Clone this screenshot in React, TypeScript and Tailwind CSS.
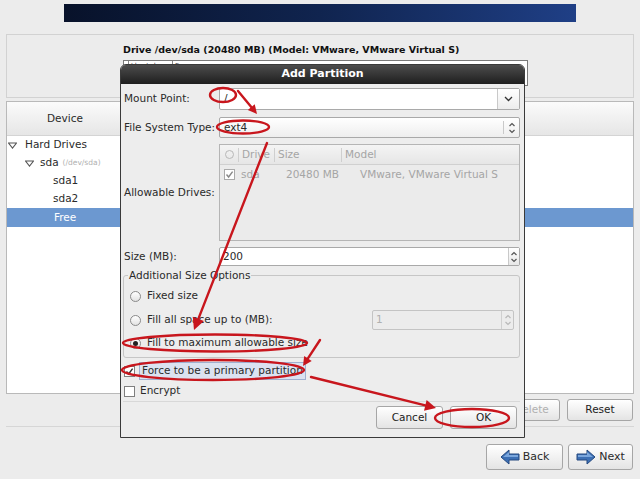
import React from "react";

const RED = "#c8161d";

type Pt = [number, number];

function Arrow({ from, to, head = 9 }: { from: Pt; to: Pt; head?: number }) {
  const dx = to[0] - from[0];
  const dy = to[1] - from[1];
  const len = Math.hypot(dx, dy);
  const ux = dx / len;
  const uy = dy / len;
  const bx = to[0] - ux * head;
  const by = to[1] - uy * head;
  const w = head * 0.5;
  const pts = `${to[0]},${to[1]} ${bx - uy * w},${by + ux * w} ${bx + uy * w},${by - ux * w}`;
  return (
    <g>
      <line x1={from[0]} y1={from[1]} x2={bx} y2={by} stroke={RED} strokeWidth={2.4} strokeLinecap="round" />
      <polygon points={pts} fill={RED} />
    </g>
  );
}

function Marks() {
  return (
    <svg className="pointer-events-none absolute left-0 top-0" width={640} height={479}>
      <g fill="none" stroke={RED} strokeWidth={2.4}>
        <ellipse cx={223} cy={95} rx={13} ry={7} />
        <ellipse cx={243} cy={127} rx={26} ry={6.5} />
        <ellipse cx={215} cy={343} rx={92} ry={8.5} />
        <ellipse cx={213} cy={370} rx={91} ry={10} />
        <ellipse cx={472} cy={418} rx={37} ry={9} />
      </g>
      <Arrow from={[238, 91]} to={[257, 114]} />
      <Arrow from={[267, 143]} to={[194, 330]} head={12} />
      <Arrow from={[320, 340]} to={[303, 366]} />
      <Arrow from={[311, 377]} to={[436, 408]} head={11} />
    </svg>
  );
}

function Radio({ on }: { on?: boolean }) {
  return (
    <span className="flex h-[11px] w-[11px] shrink-0 items-center justify-center rounded-full border border-[#8a8a8a] bg-linear-to-b from-white to-[#e2e2e2]">
      {on && <span className="h-[5px] w-[5px] rounded-full bg-[#222]" />}
    </span>
  );
}

function Check({ on, dim }: { on?: boolean; dim?: boolean }) {
  return (
    <span
      className={
        "flex h-[11px] w-[11px] shrink-0 items-center justify-center border bg-white " +
        (dim ? "border-[#aaa]" : "border-[#7f7f7f]")
      }
    >
      {on && (
        <svg width="9" height="9" viewBox="0 0 9 9">
          <path d="M1.5 4.5 L3.6 7 L7.6 1.6" fill="none" stroke={dim ? "#888" : "#333"} strokeWidth="1.4" />
        </svg>
      )}
    </span>
  );
}

function Btn({ label, w, dim, h = "h-[22px]" }: { label: string; w: string; dim?: boolean; h?: string }) {
  return (
    <div
      className={
        "flex items-center justify-center rounded-[3px] border border-[#a6a6a6] bg-linear-to-b from-white to-[#e4e4e4] " +
        h +
        " " +
        w +
        (dim ? " text-[#b0b0b0]" : " text-[#222]")
      }
    >
      {label}
    </div>
  );
}

function Triangle() {
  return (
    <svg width="9" height="7" viewBox="0 0 9 7" className="shrink-0">
      <polygon points="0.5,1 8.5,1 4.5,6" fill="none" stroke="#555" strokeWidth="1.1" />
    </svg>
  );
}

function SpinArrows({ dim }: { dim?: boolean }) {
  const c = dim ? "#b8b8b8" : "#555";
  return (
    <svg width="8" height="14" viewBox="0 0 8 14">
      <path d="M1.5 5 L4 2.5 L6.5 5" fill="none" stroke={c} strokeWidth="1.2" />
      <path d="M1.5 9 L4 11.5 L6.5 9" fill="none" stroke={c} strokeWidth="1.2" />
    </svg>
  );
}

function NavArrow({ dir }: { dir: "l" | "r" }) {
  return (
    <svg width="20" height="16" viewBox="0 0 20 16">
      <g transform={dir === "r" ? "translate(20,0) scale(-1,1)" : undefined}>
        <polygon points="1,8 9,1 9,5 19,5 19,11 9,11 9,15" fill="#3c6fb4" stroke="#24497f" strokeWidth="1" />
        <polygon points="3,8 9,3 9,6 18,6 18,8" fill="#7aa6dc" />
      </g>
    </svg>
  );
}

function Dialog() {
  return (
    <div className="absolute left-[120px] top-[64px] flex h-[374px] w-[405px] flex-col rounded-t-[6px] border border-[#3a3a3a] bg-[#ededed]">
      <div className="flex h-[19px] items-center justify-center rounded-t-[5px] bg-linear-to-b from-[#4d4d4d] to-[#1f1f1f] text-[11px] font-bold text-white">
        Add Partition
      </div>
      <div className="flex flex-col pl-[2px] pr-[4px]">
        <div className="mt-[4px] flex h-[22px] items-center">
          <span className="w-[96px] pl-[1px]">Mount Point:</span>
          <div className="flex h-full flex-1 rounded-[2px] border border-[#a9a9a9] bg-white">
            <span className="flex flex-1 items-center pl-[4px]">/</span>
            <span className="flex w-[22px] items-center justify-center border-l border-[#c9c9c9] bg-linear-to-b from-white to-[#ececec]">
              <svg width="9" height="6" viewBox="0 0 9 6">
                <path d="M1 1 L4.5 4.5 L8 1" fill="none" stroke="#333" strokeWidth="1.3" />
              </svg>
            </span>
          </div>
        </div>
        <div className="mt-[7px] flex h-[21px] items-center">
          <span className="w-[96px] pl-[1px]">File System Type:</span>
          <div className="flex h-full flex-1 rounded-[2px] border border-[#a9a9a9] bg-linear-to-b from-white to-[#eeeeee]">
            <span className="flex flex-1 items-center pl-[4px]">ext4</span>
            <span className="my-[3px] flex w-[16px] items-center justify-center border-l border-[#c9c9c9]">
              <SpinArrows />
            </span>
          </div>
        </div>
        <div className="mt-[6px] flex h-[97px] items-center">
          <span className="w-[96px] pl-[1px]">Allowable Drives:</span>
          <div className="flex h-full flex-1 flex-col border border-[#b5b5b5] bg-[#ebebeb] text-[#a5a5a5]">
            <div className="flex h-[20px] items-center border-b border-[#d0d0d0] bg-linear-to-b from-[#f4f4f4] to-[#e6e6e6]">
              <span className="flex w-[18px] justify-center">
                <span className="h-[9px] w-[9px] rounded-full border border-[#b8b8b8]" />
              </span>
              <span className="h-[14px] border-l border-[#cfcfcf]" />
              <span className="w-[35px] pl-[3px]">Drive</span>
              <span className="h-[14px] border-l border-[#cfcfcf]" />
              <span className="w-[66px] pl-[3px]">Size</span>
              <span className="h-[14px] border-l border-[#cfcfcf]" />
              <span className="pl-[3px]">Model</span>
            </div>
            <div className="flex h-[19px] items-center">
              <span className="flex w-[18px] justify-center pl-[1px]">
                <Check on dim />
              </span>
              <span className="w-[48px] pl-[3px]">sda</span>
              <span className="w-[74px]">20480 MB</span>
              <span>VMware, VMware Virtual S</span>
            </div>
          </div>
        </div>
        <div className="mt-[6px] flex h-[19px] items-center">
          <span className="w-[96px] pl-[1px]">Size (MB):</span>
          <div className="flex h-full flex-1 rounded-[2px] border border-[#a9a9a9] bg-white">
            <span className="flex flex-1 items-center pl-[3px]">200</span>
            <span className="flex w-[11px] items-center justify-center border-l border-[#c9c9c9] bg-linear-to-b from-white to-[#e8e8e8]">
              <SpinArrows />
            </span>
          </div>
        </div>
        <fieldset className="mt-[3px] h-[89px] rounded-[3px] border border-[#c6c6c6] pl-[6px] pr-[5px]">
          <legend className="ml-[-2px] px-[1px] leading-[13px]">Additional Size Options</legend>
          <div className="mt-[5px] flex h-[18px] items-center gap-[6px]">
            <Radio />
            <span>Fixed size</span>
          </div>
          <div className="mt-[5px] flex h-[20px] items-center gap-[6px]">
            <Radio />
            <span className="flex-1">Fill all space up to (MB):</span>
            <div className="flex h-full w-[142px] rounded-[2px] border border-[#c4c4c4] bg-[#ececec] text-[#b0b0b0]">
              <span className="flex flex-1 items-center pl-[3px]">1</span>
              <span className="flex w-[12px] items-center justify-center border-l border-[#d0d0d0]">
                <SpinArrows dim />
              </span>
            </div>
          </div>
          <div className="mt-[4px] flex h-[18px] items-center gap-[6px]">
            <Radio on />
            <span>Fill to maximum allowable size</span>
          </div>
        </fieldset>
        <div className="mt-[4px] flex h-[18px] items-center gap-[4px] pl-[1px]">
          <Check on />
          <span className="flex h-full items-center border border-[#9fb0d0] bg-[#dbe2f0] px-[2px]">
            Force to be a primary partition
          </span>
        </div>
        <div className="mt-[3px] flex h-[16px] items-center gap-[5px] pl-[1px]">
          <Check />
          <span>Encrypt</span>
        </div>
        <div className="mt-[2px] border-t border-[#d8d8d8]" />
        <div className="mt-[4px] flex justify-end gap-[7px] pr-[3px]">
          <Btn label="Cancel" w="w-[67px]" h="h-[23px]" />
          <Btn label="OK" w="w-[67px]" h="h-[23px]" />
        </div>
      </div>
    </div>
  );
}

export default function App() {
  return (
    <div className="relative h-[479px] w-[640px] overflow-hidden bg-[#ececec] font-['DejaVu_Sans',sans-serif] text-[10.5px] text-[#2a2a2a]">
      <div className="flex h-full flex-col">
        <div className="mx-[64px] mt-[4px] h-[18px] bg-linear-to-r from-[#08122a] via-[#10244f] to-[#1f3f86]" />
        <div className="mx-[6px] mt-[12px] h-[64px] border border-[#d2d2d2] pl-[116px] pt-[8px]">
          <div className="text-[9.5px] font-bold text-[#111]">Drive /dev/sda (20480 MB) (Model: VMware, VMware Virtual S)</div>
          <div className="mt-[3px] flex h-[26px] w-[405px] border border-[#7a7a7a] bg-white text-[7px] text-[#444]">
            <span className="w-[5px] border-r border-[#888]" />
            <span className="w-[44px] border-r border-[#888] pl-[1px]">/dev/sda</span>
            <span className="pl-[2px]">Free</span>
          </div>
        </div>
        <div className="mx-[6px] mt-[3px] flex h-[293px] flex-col border border-[#b9b9b9] bg-white">
          <div className="flex h-[34px] border-b border-[#d4d4d4] bg-linear-to-b from-[#fbfbfb] to-[#e6e6e6]">
            <div className="flex w-[117px] items-center justify-center border-r border-[#d0d0d0]">Device</div>
            <div className="flex-1" />
          </div>
          <div className="flex h-[18px] items-center gap-[8px] pl-[1px]">
            <Triangle />
            <span>Hard Drives</span>
          </div>
          <div className="flex h-[18px] items-center gap-[6px] pl-[18px]">
            <Triangle />
            <span>sda</span>
            <span className="ml-[-2px] text-[7.5px] text-[#b0b0b0]">(/dev/sda)</span>
          </div>
          <div className="flex h-[18px] items-center pl-[46px]">sda1</div>
          <div className="flex h-[18px] items-center pl-[46px]">sda2</div>
          <div className="flex h-[19px] items-center bg-[#6c98d0] pl-[47px] text-white">Free</div>
        </div>
        <div className="mr-[7px] mt-[5px] flex justify-end gap-[7px]">
          <Btn label="Delete" w="w-[57px]" dim />
          <Btn label="Reset" w="w-[66px]" />
        </div>
        <div className="mx-[6px] mt-[5px] border-t border-[#d6d6d6]" />
        <div className="mr-[7px] mt-[17px] flex justify-end gap-[5px]">
          <div className="flex h-[26px] w-[77px] items-center justify-center gap-[3px] rounded-[3px] border border-[#a6a6a6] bg-linear-to-b from-white to-[#e4e4e4] text-[11px]">
            <NavArrow dir="l" />
            <span>Back</span>
          </div>
          <div className="flex h-[26px] w-[65px] items-center justify-center gap-[3px] rounded-[3px] border border-[#a6a6a6] bg-linear-to-b from-white to-[#e4e4e4] text-[11px]">
            <NavArrow dir="r" />
            <span>Next</span>
          </div>
        </div>
      </div>
      <Dialog />
      <Marks />
    </div>
  );
}
